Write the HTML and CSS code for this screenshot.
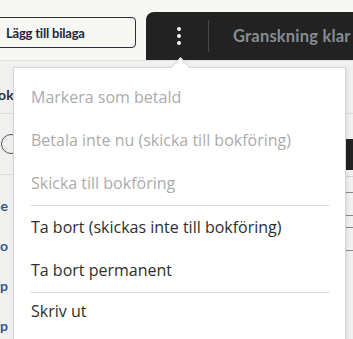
FILE: index.html
```html
<!DOCTYPE html>
<html lang="sv">
<head>
  <meta charset="UTF-8">
  <meta name="viewport" content="width=device-width, initial-scale=1.0">
  <title>Faktura</title>
  <link rel="stylesheet" href="styles.css">
</head>
<body>
  <div class="topbar">
    <button class="attach-button">Lägg till bilaga</button>
    <div class="dark-bar">
      <button class="kebab" aria-label="Fler val">
        <span></span><span></span><span></span>
      </button>
      <div class="divider"></div>
      <span class="review">Granskning klar</span>
    </div>
  </div>

  <div class="content">
    <div class="left-col">
      <div class="head-cell"><span>Bok</span></div>
      <div class="radio-row"><span class="radio"></span></div>
      <div class="link-rows">
        <div class="link-row"><span>Se</span></div>
        <div class="link-row"><span>Go</span></div>
        <div class="link-row"><span>Up</span></div>
        <div class="link-row"><span>Up</span></div>
      </div>
    </div>
    <div class="right-col">
      <div class="right-head"></div>
      <div class="right-dark"></div>
      <div class="right-line light"></div>
      <div class="right-line first"></div>
      <div class="right-line"></div>
      <div class="right-line short"></div>
      <div class="right-line"></div>
    </div>
  </div>

  <!-- Dropdown from the kebab button -->
  <div class="menu">
    <div class="menu-item disabled">Markera som betald</div>
    <div class="menu-item disabled">Betala inte nu (skicka till bokföring)</div>
    <div class="menu-item disabled">Skicka till bokföring</div>
    <div class="menu-sep"></div>
    <div class="menu-item">Ta bort (skickas inte till bokföring)</div>
    <div class="menu-item">Ta bort permanent</div>
    <div class="menu-sep"></div>
    <div class="menu-item last">Skriv ut</div>
  </div>
</body>
</html>
```

FILE: styles.css
```css
* {
  margin: 0;
  padding: 0;
  box-sizing: border-box;
}

body {
  font-family: 'Open Sans', 'Noto Sans', sans-serif;
  background-color: #f1f1ef;
  width: 353px;
  height: 339px;
  overflow: hidden;
  position: relative;
}

.topbar {
  height: 61px;
  display: flex;
  align-items: flex-start;
  background-color: #f7f7f4;
  border-bottom: 1px solid #e0e0dd;
}

.attach-button {
  margin-top: 17px;
  margin-left: -4px;
  width: 140px;
  height: 31px;
  border: 1px solid #2b2f38;
  border-radius: 4px;
  background-color: #f7f7f4;
  font-family: 'Lato', sans-serif;
  font-size: 13px;
  font-weight: 700;
  letter-spacing: -0.2px;
  color: #22283a;
  text-align: left;
  padding-left: 9px;
}

.dark-bar {
  margin-top: 12px;
  margin-left: 10px;
  flex: 1;
  height: 48px;
  background-color: #222222;
  border-top-left-radius: 8px;
  display: flex;
  align-items: center;
}

.kebab {
  width: 60px;
  height: 48px;
  padding-left: 6px;
  background: none;
  border: none;
  display: flex;
  flex-direction: column;
  justify-content: center;
  align-items: center;
  gap: 3px;
}

.kebab span {
  width: 4px;
  height: 4px;
  border-radius: 50%;
  background-color: #f2f2f2;
}

.divider {
  width: 1px;
  height: 32px;
  background-color: #484848;
  margin-left: 2px;
}

.review {
  margin-left: 24px;
  font-family: 'Lato', sans-serif;
  font-size: 16.5px;
  font-weight: 700;
  letter-spacing: 0.2px;
  color: #878c91;
  white-space: nowrap;
}

.content {
  display: flex;
  justify-content: space-between;
}

.left-col {
  width: 13px;
  overflow: hidden;
}

.head-cell {
  height: 53px;
  padding-top: 25px;
  font-family: 'Lato', sans-serif;
  font-size: 14px;
  font-weight: 700;
  color: #2b2f38;
  border-bottom: 1px solid #dcdcd9;
}

.head-cell span {
  margin-left: -11px;
}

.radio-row {
  height: 61px;
  display: flex;
  align-items: center;
  border-bottom: 1px solid #dcdcd9;
}

.radio {
  margin-left: 1px;
  flex-shrink: 0;
  width: 20px;
  height: 20px;
  border: 1px solid #555;
  border-radius: 50%;
}

.link-rows {
  padding-top: 11px;
}

.link-row {
  width: 8px;
  height: 40px;
  line-height: 40px;
  display: flex;
  justify-content: flex-end;
  overflow: hidden;
  font-family: 'Lato', sans-serif;
  font-size: 14px;
  font-weight: 700;
  color: #2c5896;
  white-space: nowrap;
}

.right-col {
  width: 7px;
}

.right-head {
  height: 53px;
  border-bottom: 1px solid #dcdcd9;
}

.right-dark {
  margin-top: 25px;
  height: 31px;
  background-color: #222222;
}

.right-line {
  height: 1px;
  background-color: #8a8a8a;
  margin-top: 22px;
}

.right-line.light {
  margin-top: 6px;
  background-color: #cfcfcf;
}

.right-line.first {
  margin-top: 15px;
}

.right-line.short {
  margin-top: 11px;
}

/* Dropdown menu */
.menu {
  position: absolute;
  top: 67px;
  left: 13px;
  width: 333px;
  height: 290px;
  background-color: #ffffff;
  border: 1px solid #d8d8d8;
  box-shadow: 1px 1px 4px rgba(0, 0, 0, 0.1);
  padding-top: 8px;
}

.menu::before {
  content: "";
  position: absolute;
  top: -8px;
  left: 160px;
  width: 12px;
  height: 12px;
  background-color: #ffffff;
  border-top: 1px solid #d8d8d8;
  border-left: 1px solid #d8d8d8;
  transform: rotate(45deg);
}

.menu-item {
  height: 43px;
  line-height: 43px;
  padding-left: 17px;
  font-size: 16px;
  color: #2e2e2e;
  white-space: nowrap;
}

.menu-item.disabled {
  color: #ababab;
}

.menu-item.last {
  height: 37px;
  line-height: 37px;
}

.menu-sep {
  height: 1px;
  margin: 0 16px 0 17px;
  background-color: #d6d6d6;
}
```
